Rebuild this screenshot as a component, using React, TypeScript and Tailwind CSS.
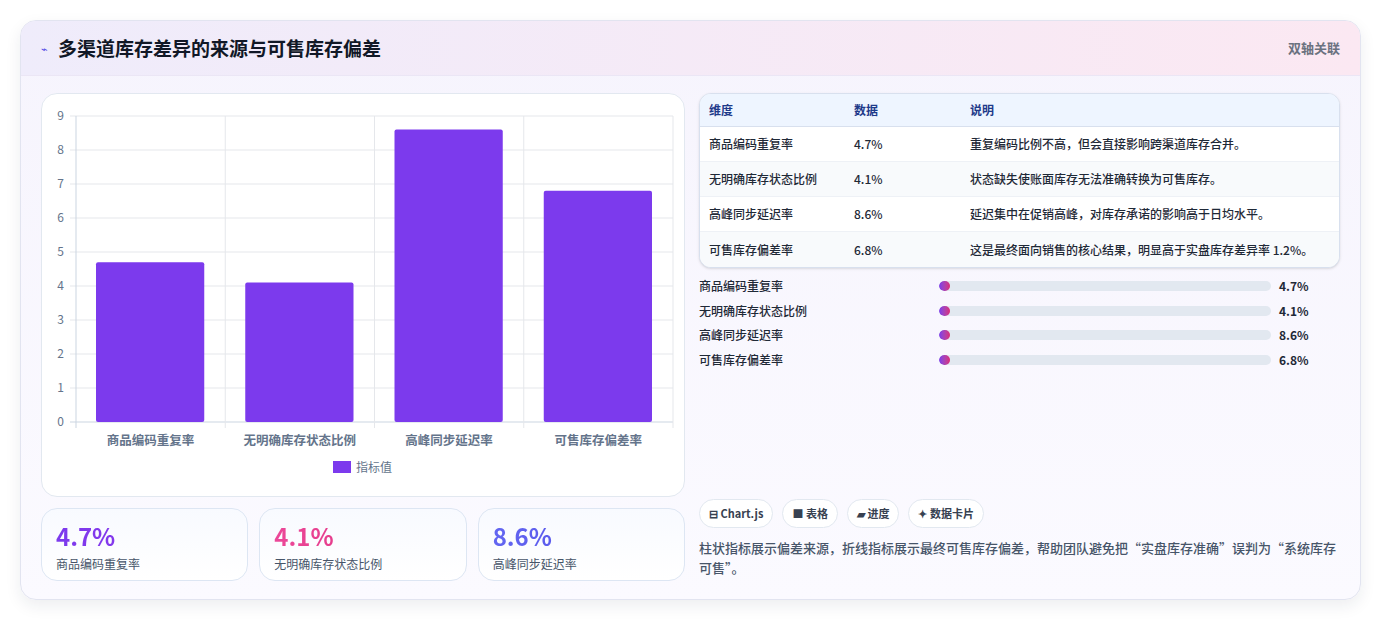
const font = { fontFamily: '"Noto Sans CJK SC", "Noto Sans", sans-serif' };

const rows = [
  { name: '商品编码重复率', v: 4.7, note: '重复编码比例不高，但会直接影响跨渠道库存合并。' },
  { name: '无明确库存状态比例', v: 4.1, note: '状态缺失使账面库存无法准确转换为可售库存。' },
  { name: '高峰同步延迟率', v: 8.6, note: '延迟集中在促销高峰，对库存承诺的影响高于日均水平。' },
  { name: '可售库存偏差率', v: 6.8, note: '这是最终面向销售的核心结果，明显高于实盘库存差异率 1.2%。' },
];

function Chart() {
  const x0 = 34, x1 = 631, y0 = 22, y1 = 328;
  const step = (y1 - y0) / 9;
  const cw = (x1 - x0) / 4;
  return (
    <svg width="643" height="403" className="block" style={font}>
      {Array.from({ length: 10 }, (_, i) => (
        <g key={i}>
          <line x1={x0 - 6} x2={x1} y1={y1 - i * step} y2={y1 - i * step} stroke={i === 0 ? '#cbd5e1' : '#e5e7eb'} />
          <text x={x0 - 12} y={y1 - i * step + 4} fontSize="12" fill="#64748b" textAnchor="end">{i}</text>
        </g>
      ))}
      {Array.from({ length: 5 }, (_, i) => (
        <line key={i} x1={x0 + i * cw} x2={x0 + i * cw} y1={y0} y2={y1 + 6} stroke={i === 0 ? '#cbd5e1' : '#e5e7eb'} />
      ))}
      {rows.map((r, i) => {
        const h = r.v * step;
        return (
          <g key={r.name}>
            <rect x={x0 + i * cw + 20} y={y1 - h} width={cw - 41} height={h} rx="2" fill="#7c3aed" />
            <text x={x0 + i * cw + cw / 2} y={y1 + 23} fontSize="12.5" fill="#64748b" fontWeight="600" textAnchor="middle">{r.name}</text>
          </g>
        );
      })}
      <rect x="291" y="367" width="18" height="12" fill="#7c3aed" />
      <text x="314" y="378" fontSize="12" fill="#64748b">指标值</text>
    </svg>
  );
}

export default function App() {
  const stats = [
    { v: '4.7%', l: '商品编码重复率', c: 'from-[#7c3aed] to-[#9333ea]' },
    { v: '4.1%', l: '无明确库存状态比例', c: 'from-[#ec4899] to-[#db2777]' },
    { v: '8.6%', l: '高峰同步延迟率', c: 'from-[#6366f1] to-[#4f46e5]' },
  ];
  return (
    <div className="w-[1381px] h-[621px] bg-white p-5 pb-0" style={font}>
      <div className="h-[580px] rounded-2xl border border-[#e2e4f0] bg-gradient-to-b from-[#f6f4fd] to-[#fbfaff] shadow-[0_6px_16px_rgba(30,41,59,0.08)] overflow-hidden">
        <div className="h-[55px] flex items-center justify-between px-5 bg-gradient-to-r from-[#efecfb] to-[#fbe8f2] border-b border-[#ebe6f5]">
          <div className="flex items-center gap-2.5">
            <span className="text-[#4f46e5] text-[11px]">⌁</span>
            <h1 className="text-[19px] font-bold text-[#111827]">多渠道库存差异的来源与可售库存偏差</h1>
          </div>
          <span className="text-[13px] text-[#6b7280] font-semibold">双轴关联</span>
        </div>
        <div className="flex gap-[14px] px-5 pt-[17px]">
          <div className="w-[644px] flex flex-col gap-[11px]">
            <div className="h-[404px] rounded-2xl border border-[#e2e8f0] bg-white">
              <Chart />
            </div>
            <div className="grid grid-cols-3 gap-[11px]">
              {stats.map(s => (
                <div key={s.v} className="h-[73px] rounded-2xl border border-[#dde6f3] bg-gradient-to-b from-[#f8faff] to-white px-[14px] pt-[11px]">
                  <div className={`text-[24px] font-bold leading-8 bg-gradient-to-r ${s.c} bg-clip-text text-transparent`}>{s.v}</div>
                  <div className="text-[12px] text-[#475569] mt-[3px]">{s.l}</div>
                </div>
              ))}
            </div>
          </div>
          <div className="flex-1 flex flex-col">
            <div className="rounded-xl border border-[#d8e0ee] bg-white overflow-hidden text-[12px] shadow-sm">
              <div className="flex h-[33px] items-center bg-[#eef5ff] border-b border-[#d8e0ee] font-semibold text-[#1e3a8a]">
                <div className="w-[154px] pl-[9px]">维度</div>
                <div className="w-[116px]">数据</div>
                <div>说明</div>
              </div>
              {rows.map((r, i) => (
                <div key={r.name} className={`flex h-[35px] items-center text-[#1f2937] font-medium ${i % 2 ? 'bg-[#f8fafc]' : ''} ${i < 3 ? 'border-b border-[#eef1f6]' : ''}`}>
                  <div className="w-[154px] pl-[9px]">{r.name}</div>
                  <div className="w-[116px]">{r.v}%</div>
                  <div>{r.note}</div>
                </div>
              ))}
            </div>
            <div className="mt-[10px] flex flex-col gap-[8px]">
              {rows.map(r => (
                <div key={r.name} className="flex items-center h-[16.5px] text-[12px]">
                  <div className="w-[240px] text-[#1f2937] font-medium">{r.name}</div>
                  <div className="w-[332px] h-[10px] rounded-full bg-[#e2e8f0] overflow-hidden">
                    <div className="h-full rounded-full bg-gradient-to-r from-[#7c3aed] to-[#db2777]" style={{ width: `${r.v * 0.4}%`, minWidth: 11 }} />
                  </div>
                  <div className="ml-2 font-bold text-[#1f2937]">{r.v}%</div>
                </div>
              ))}
            </div>
            <div className="mt-[131px] flex gap-[9px]">
              {['⊟ Chart.js', '■ 表格', '▰ 进度', '✦ 数据卡片'].map(t => (
                <span key={t} className="h-[29px] px-[9px] flex items-center rounded-full border border-[#e2e8f0] bg-white text-[11px] font-semibold text-[#374151]">{t}</span>
              ))}
            </div>
            <p className="mt-[10px] text-[13px] leading-5 text-[#475569] font-medium">柱状指标展示偏差来源，折线指标展示最终可售库存偏差，帮助团队避免把“实盘库存准确”误判为“系统库存可售”。</p>
          </div>
        </div>
      </div>
    </div>
  );
}
